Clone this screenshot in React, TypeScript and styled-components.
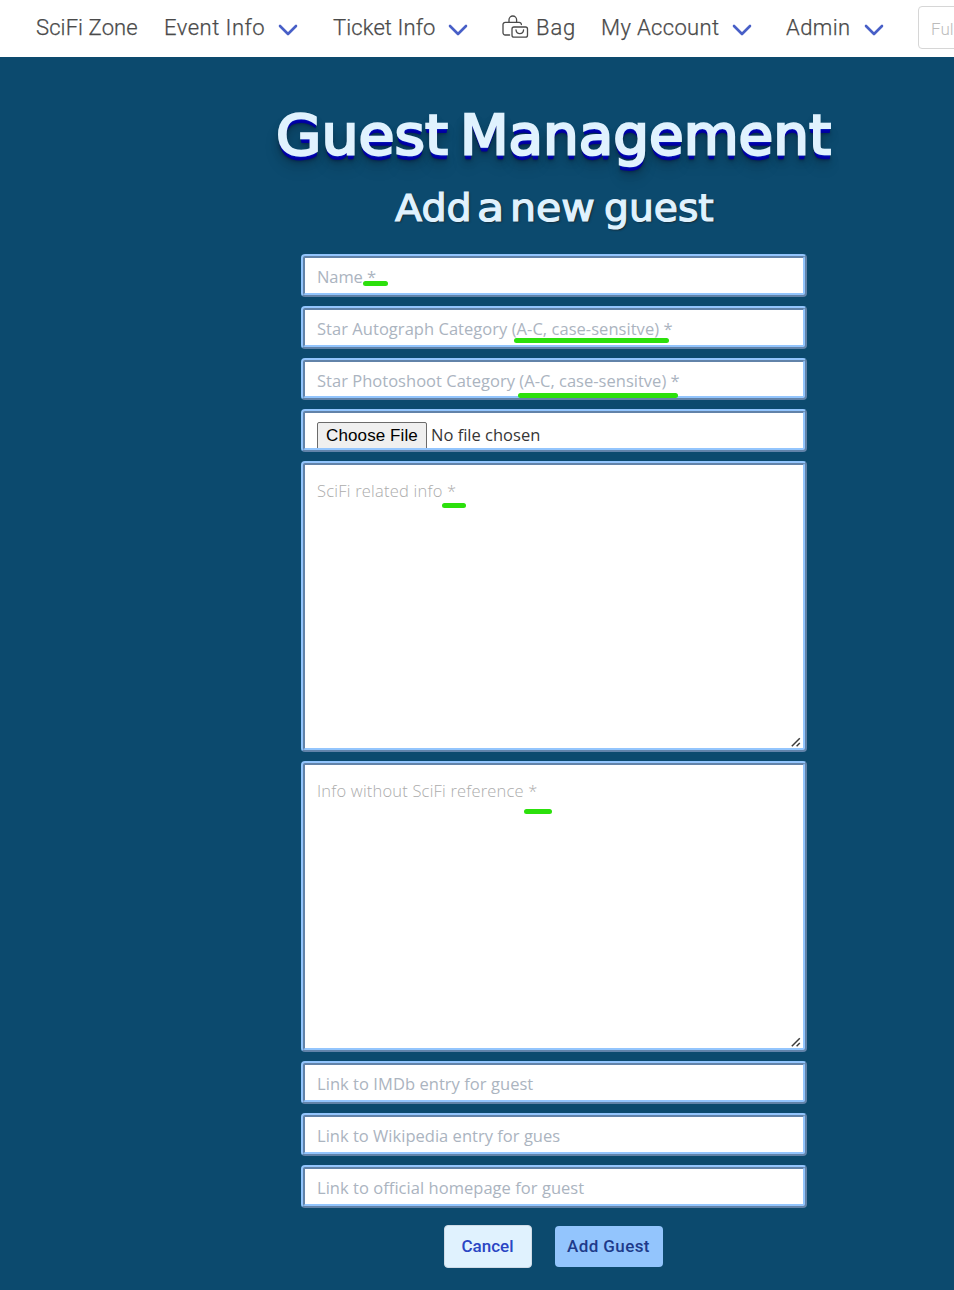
import React from "react";
import styled, { createGlobalStyle } from "styled-components";

const GlobalStyle = createGlobalStyle`
  *, *::before, *::after { box-sizing: border-box; }
  html, body { margin: 0; background: #0c4a6e; overflow: hidden; }
`;

const Page = styled.div`
  width: 100%;
  min-height: 1290px;
  overflow: hidden;
  background: #0c4a6e;
`;

const Navbar = styled.nav`
  display: flex;
  align-items: center;
  width: 1108px;
  height: 57px;
  padding-left: 36px;
  background: #fff;
  color: #4a4a4a;
  font: 300 22px/54px Roboto, sans-serif;
`;

const NavItem = styled.a<{ $width: number; $after: number }>`
  display: flex;
  align-items: center;
  flex: none;
  width: ${(p) => p.$width}px;
  height: 56px;
  margin-right: ${(p) => p.$after}px;
  white-space: nowrap;
`;

const NavLabel = styled.span<{ $tracking: number }>`
  flex: 1;
  margin-bottom: 2px;
  letter-spacing: ${(p) => p.$tracking}px;
  -webkit-text-stroke: 0.25px #4a4a4a;
`;

const Chevron = styled.svg`
  flex: none;
  width: 20px;
  height: 12px;
  margin-top: 2px;
`;

const BagIcon = styled.svg`
  flex: none;
  width: 27px;
  height: 24px;
  margin-right: 7px;
  margin-bottom: 3px;
`;

const SearchInput = styled.input`
  flex: none;
  width: 190px;
  height: 43px;
  margin-bottom: 2px;
  padding: 2px 12px 0;
  border: 1px solid #d6d6d6;
  border-radius: 4px;
  outline: none;
  font: 300 17px Roboto, sans-serif;
  &::placeholder { color: #bcbcbc; opacity: 1; }
`;

const Main = styled.main`
  display: flex;
  flex-direction: column;
  align-items: center;
  width: 1108px;
  padding-top: 48px;
`;

const Title = styled.h1`
  display: flex;
  margin: 0;
  padding-left: 2px;
  color: #e0f2fe;
  font: 400 55px/60px "DejaVu Sans", sans-serif;
  -webkit-text-stroke: 2.4px #e0f2fe;
  text-shadow: 0 1px 0 #1e4fc4, 0 2px 0 #0618b4, 0 3px 0 #0000b0, 0 4px 0 #0000a4,
    0 5px 0 #00009c, 0 6px 3px rgba(0, 0, 40, 0.4), 0 7px 8px rgba(0, 0, 0, 0.25),
    0 12px 14px rgba(0, 0, 0, 0.18);
`;

const Word = styled.span<{ $width: number; $stretch: number }>`
  display: block;
  width: ${(p) => p.$width}px;
  transform: scaleX(${(p) => p.$stretch});
  transform-origin: left;
  white-space: nowrap;
`;

const Subtitle = styled.h2`
  display: flex;
  margin: 22px 0 23px;
  color: #e0f2fe;
  font: 400 37px/44px "DejaVu Sans", sans-serif;
  -webkit-text-stroke: 1.2px #e0f2fe;
  text-shadow: 1px 1px 2px #1b1b1b;
`;

const Form = styled.form`
  display: flex;
  flex-direction: column;
  gap: 9px;
  width: 506px;
`;

const Field = styled.div`
  position: relative;
  display: flex;
`;

const TextInput = styled.input<{ $tracking: number }>`
  width: 100%;
  height: 42.75px;
  padding: 2.5px 12px 0;
  border: 4px ridge #93c5fd;
  border-radius: 4px;
  outline: none;
  background: #fff;
  font: 400 16.5px "Open Sans", sans-serif;
  letter-spacing: ${(p) => p.$tracking}px;
  &::placeholder { color: #abb4bf; opacity: 1; }
`;

const TextArea = styled.textarea<{ $tracking: number }>`
  display: block;
  width: 100%;
  height: 291px;
  padding: 14px 12px;
  border: 4px ridge #93c5fd;
  border-radius: 4px;
  outline: none;
  resize: none;
  background: #fff;
  font: 300 16.5px "Open Sans", sans-serif;
  letter-spacing: ${(p) => p.$tracking}px;
  &::placeholder { color: #acacac; opacity: 1; }
`;

const Grip = styled.svg`
  position: absolute;
  right: 6px;
  bottom: 5px;
  width: 10px;
  height: 10px;
`;

const FilePicker = styled.label`
  display: flex;
  align-items: flex-start;
  width: 100%;
  height: 43px;
  padding: 9px 12px 0;
  overflow: hidden;
  border: 4px ridge #93c5fd;
  border-radius: 4px;
  background: #fff;
`;

const FileButton = styled.span`
  flex: none;
  width: 110px;
  height: 30px;
  border: 1px solid #6b6b6b;
  border-radius: 2px;
  background: #efefef;
  color: #000;
  font: 400 17px/25px "Liberation Sans", sans-serif;
  letter-spacing: 0.1px;
  text-align: center;
`;

const FileStatus = styled.span`
  margin-left: 4px;
  color: #363636;
  font: 400 16.5px/26px "Open Sans", sans-serif;
`;

const Marker = styled.span<{ $x: number; $y: number; $length: number }>`
  position: absolute;
  left: ${(p) => p.$x}px;
  top: ${(p) => p.$y}px;
  width: ${(p) => p.$length}px;
  height: 5px;
  border-radius: 3px;
  background: #2ce00c;
`;

const Actions = styled.div`
  display: flex;
  justify-content: center;
  align-items: center;
  gap: 23px;
  height: 43px;
  margin-top: 8px;
  padding-right: 2px;
`;

const Button = styled.button<{ $primary?: boolean }>`
  width: ${(p) => (p.$primary ? 108 : 88)}px;
  height: ${(p) => (p.$primary ? 41 : 43)}px;
  padding: 0;
  border: ${(p) => (p.$primary ? "0" : "1px solid #cfdbe6")};
  border-radius: 4px;
  background: ${(p) => (p.$primary ? "#93c5fd" : "#e0f2fe")};
  color: ${(p) => (p.$primary ? "#1e3a8a" : "#2b46c4")};
  font: 500 17px Roboto, sans-serif;
  letter-spacing: ${(p) => (p.$primary ? 0.4 : 0)}px;
`;

const menu = [
  { label: "SciFi Zone", width: 104, after: 24, tracking: 0.1 },
  { label: "Event Info", width: 134, after: 35, tracking: 0.5, dropdown: true },
  { label: "Ticket Info", width: 135, after: 34, tracking: 0.1, dropdown: true },
  { label: "Bag", width: 75, after: 24, tracking: 0.9, bag: true },
  { label: "My Account", width: 151, after: 34, tracking: 0.35, dropdown: true },
  { label: "Admin", width: 98, after: 34, tracking: 0.4, dropdown: true },
];

function ResizeGrip() {
  return (
    <Grip viewBox="0 0 10 10" fill="none" stroke="#3c3c3c" strokeWidth="1.5">
      <path d="M0.8 9.2l8-8M5.6 9.2l3.2-3.2" />
    </Grip>
  );
}

export default function App() {
  return (
    <Page>
      <GlobalStyle />
      <Navbar>
        {menu.map((item) => (
          <NavItem key={item.label} $width={item.width} $after={item.after}>
            {item.bag && (
              <BagIcon viewBox="0 0 27 24" fill="none" stroke="#4a4a4a" strokeWidth="1.3" strokeLinecap="round" strokeLinejoin="round">
                <path d="M7 7.3V4.8a3.8 3.8 0 0 1 7.6 0v2.5" />
                <path d="M7.6 20H3.2A2.2 2.2 0 0 1 1 17.8V9.5a2.2 2.2 0 0 1 2.2-2.2h14a2.2 2.2 0 0 1 2.2 2.2" />
                <rect x="10" y="12" width="15.5" height="10.2" rx="2" />
                <path d="M14 14.8c.3 2.3 1.7 3.8 3.8 3.8s3.5-1.5 3.8-3.8" />
              </BagIcon>
            )}
            <NavLabel $tracking={item.tracking}>{item.label}</NavLabel>
            {item.dropdown && (
              <Chevron viewBox="0 0 20 12" fill="none" stroke="#485fc7" strokeWidth="2.6" strokeLinecap="round" strokeLinejoin="round">
                <path d="M2 2l8 8 8-8" />
              </Chevron>
            )}
          </NavItem>
        ))}
        <SearchInput placeholder="Full text search" />
      </Navbar>
      <Main>
        <Title>
          <Word $width={184} $stretch={1.065}>Guest</Word>{" "}
          <Word $width={374} $stretch={1.024}>Management</Word>
        </Title>
        <Subtitle>
          <Word $width={82.5} $stretch={1.07}>Add</Word>{" "}
          <Word $width={32.5} $stretch={1.2}>a</Word>{" "}
          <Word $width={94.5} $stretch={1.11}>new</Word>{" "}
          <Word $width={109} $stretch={1.06}>guest</Word>
        </Subtitle>
        <Form>
          <Field>
            <TextInput placeholder="Name *" $tracking={-0.1} />
            <Marker $x={62} $y={27} $length={25} />
          </Field>
          <Field>
            <TextInput placeholder="Star Autograph Category (A-C, case-sensitve) *" $tracking={0.04} />
            <Marker $x={213} $y={32.5} $length={155} />
          </Field>
          <Field>
            <TextInput placeholder="Star Photoshoot Category (A-C, case-sensitve) *" $tracking={0.02} />
            <Marker $x={217} $y={35.5} $length={160} />
          </Field>
          <FilePicker>
            <FileButton>Choose File</FileButton>
            <FileStatus>No file chosen</FileStatus>
          </FilePicker>
          <Field>
            <TextArea placeholder="SciFi related info *" $tracking={0.22} />
            <ResizeGrip />
            <Marker $x={141} $y={42} $length={24} />
          </Field>
          <Field>
            <TextArea placeholder="Info without SciFi reference *" $tracking={0.19} />
            <ResizeGrip />
            <Marker $x={223} $y={48} $length={28} />
          </Field>
          <TextInput placeholder="Link to IMDb entry for guest" $tracking={0.05} />
          <TextInput placeholder="Link to Wikipedia entry for gues" $tracking={0.02} />
          <TextInput placeholder="Link to official homepage for guest" $tracking={0.04} />
          <Actions>
            <Button type="button">Cancel</Button>
            <Button type="button" $primary>
              Add Guest
            </Button>
          </Actions>
        </Form>
      </Main>
    </Page>
  );
}
